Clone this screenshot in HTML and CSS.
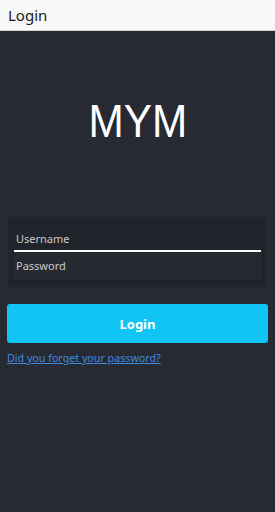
FILE: index.html
```html
<!DOCTYPE html>
<html>
<head>
<meta charset="utf-8">
<link rel="stylesheet" href="styles.css">
</head>
<body>
<header class="titlebar">Login</header>
<main class="page">
  <h1 class="brand"><span class="brand-text">MYM</span></h1>
  <form class="login-form">
    <div class="fields">
      <div class="field field-user">Username</div>
      <div class="field field-pass">Password</div>
    </div>
    <button type="button" class="btn-login">Login</button>
    <a class="forgot" href="#">Did you forget your password?</a>
  </form>
</main>
</body>
</html>
```
FILE: styles.css
```css
html, body {
  margin: 0;
  padding: 0;
  height: 100%;
}
body {
  background: #282a33;
  font-family: "Noto Sans", "Open Sans", sans-serif;
}
.titlebar {
  height: 31px;
  box-sizing: border-box;
  background: #f8f8f8;
  border-bottom: 1px solid #d4d4d4;
  color: #1a1a1a;
  font-size: 15px;
  line-height: 31px;
  padding-left: 8px;
}
.page {
  padding: 0 8px;
}
.brand {
  margin: 66px 0 0;
  font-family: "Liberation Sans", Arial, sans-serif;
  font-weight: 400;
  font-size: 47px;
  line-height: 48px;
  color: #ffffff;
  text-align: center;
}
.brand-text {
  display: inline-block;
  transform: scaleX(0.9);
}
.login-form {
  margin: 72px 0 0;
}
.fields {
  background: #21242b;
  padding: 9px 6px 7px;
}
.field {
  height: 24px;
  padding-left: 2px;
  font-size: 11px;
  line-height: 26px;
  color: #c9cbcf;
}
.field-user {
  background: #21242b;
  border-bottom: 2px solid #ffffff;
}
.field-pass {
  margin-top: 1px;
  height: 27px;
  background: #262930;
}
.btn-login {
  display: block;
  width: calc(100% + 2px);
  margin: 17px -1px 0;
  height: 39px;
  border: none;
  border-radius: 3px;
  background: #10c4f4;
  color: #ffffff;
  font-family: "Noto Sans", "Open Sans", sans-serif;
  font-weight: 700;
  font-size: 13px;
}
.forgot {
  display: inline-block;
  margin: 8px 0 0 -1px;
  font-size: 10.7px;
  color: #3f8be0;
  text-decoration: underline;
}
```
